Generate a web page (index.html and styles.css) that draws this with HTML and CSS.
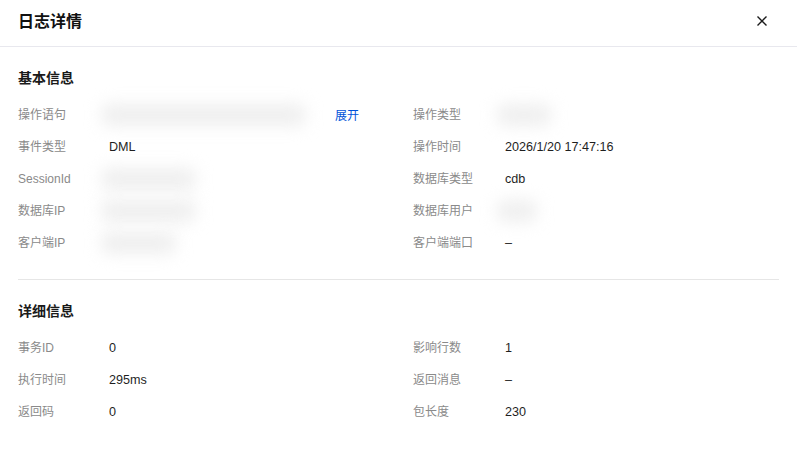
FILE: index.html
```html
<!DOCTYPE html>
<html lang="zh-CN">
<head>
<meta charset="utf-8">
<title>日志详情</title>
<link rel="stylesheet" href="styles.css">
</head>
<body>
<div class="dialog">
  <header class="dlg-head">
    <h1 class="dlg-title">日志详情</h1>
    <button class="dlg-close" aria-label="关闭">
      <svg width="12" height="12" viewBox="0 0 12 12"><path d="M1.5 1.5 L10.5 10.5 M10.5 1.5 L1.5 10.5" stroke="#1a1a1a" stroke-width="1.4" fill="none"/></svg>
    </button>
  </header>
  <main class="dlg-body">
    <section class="sec">
      <h2 class="sec-title">基本信息</h2>
      <div class="grid">
        <div class="item"><span class="lbl">操作语句</span><span class="val"><span class="blur blur-wide"></span><a class="link">展开</a></span></div>
        <div class="item"><span class="lbl">操作类型</span><span class="val"><span class="blur blur-s"></span></span></div>
        <div class="item"><span class="lbl">事件类型</span><span class="val">DML</span></div>
        <div class="item"><span class="lbl">操作时间</span><span class="val">2026/1/20 17:47:16</span></div>
        <div class="item"><span class="lbl">SessionId</span><span class="val"><span class="blur blur-m"></span></span></div>
        <div class="item"><span class="lbl">数据库类型</span><span class="val">cdb</span></div>
        <div class="item"><span class="lbl">数据库IP</span><span class="val"><span class="blur blur-m"></span></span></div>
        <div class="item"><span class="lbl">数据库用户</span><span class="val"><span class="blur blur-xs"></span></span></div>
        <div class="item"><span class="lbl">客户端IP</span><span class="val"><span class="blur blur-ms"></span></span></div>
        <div class="item"><span class="lbl">客户端端口</span><span class="val">–</span></div>
      </div>
    </section>
    <hr class="divider">
    <section class="sec">
      <h2 class="sec-title">详细信息</h2>
      <div class="grid">
        <div class="item"><span class="lbl">事务ID</span><span class="val">0</span></div>
        <div class="item"><span class="lbl">影响行数</span><span class="val">1</span></div>
        <div class="item"><span class="lbl">执行时间</span><span class="val">295ms</span></div>
        <div class="item"><span class="lbl">返回消息</span><span class="val">–</span></div>
        <div class="item"><span class="lbl">返回码</span><span class="val">0</span></div>
        <div class="item"><span class="lbl">包长度</span><span class="val">230</span></div>
      </div>
    </section>
  </main>
  <div class="watermark" aria-hidden="true">
    <span class="wm wm1">693daa43</span><span class="wm wm2">693daa43</span><span class="wm wm3">693daa43</span><span class="wm wm4">693daa43</span>
    <span class="wm wm5">693daa43</span><span class="wm wm6">693daa43</span><span class="wm wm7">693daa43</span><span class="wm wm8">693daa43</span>
    <span class="wm wm9">693daa43</span><span class="wm wm10">693daa43</span><span class="wm wm11">693daa43</span><span class="wm wm12">693daa43</span>
  </div>
</div>
</body>
</html>
```
FILE: styles.css
```css
* { box-sizing: border-box; }
html, body { margin: 0; padding: 0; background: #fff; }
body {
  font-family: "Liberation Sans", Arial, "Noto Sans CJK SC", sans-serif;
  color: #1f1f1f;
  width: 797px;
  height: 450px;
  overflow: hidden;
}
.dialog { position: relative; width: 797px; height: 450px; }
.dlg-head {
  height: 47px;
  border-bottom: 1px solid #e8e8ee;
  display: flex;
  align-items: center;
  justify-content: space-between;
  padding: 0 29px 6px 18px;
}
.dlg-title {
  margin: 0;
  font-size: 16px;
  font-weight: 600;
  color: #111;
  line-height: 24px;
  font-family: "Noto Sans CJK SC", sans-serif;
}
.dlg-close {
  border: 0; background: none; padding: 0; margin: 0;
  width: 12px; height: 12px; display: flex;
  margin-top: 2px;
}
.dlg-body { padding: 19px 18px 0 18px; }
.sec-title {
  margin: 0 0 10px 0;
  font-size: 14px;
  font-weight: 700;
  line-height: 22px;
  color: #1a1a1a;
  font-family: "Noto Sans CJK SC", sans-serif;
}
.grid {
  display: grid;
  grid-template-columns: 395px 1fr;
}
.item {
  display: flex;
  align-items: center;
  height: 32px;
  padding-top: 1px;
  font-size: 12px;
  line-height: 20px;
}
.lbl {
  width: 91px;
  flex: none;
  color: #8a8a8a;
  font-family: "Liberation Sans", "Noto Sans CJK SC", sans-serif;
}
.item:nth-child(2n) .lbl { width: 92px; }
.val {
  display: flex;
  align-items: center;
  color: #1f1f1f;
  position: relative;
  font-size: 12.6px;
}
.link {
  color: #0052d9;
  font-size: 12px;
  margin-left: 29px;
  font-family: "Noto Sans CJK SC", sans-serif;
  cursor: pointer;
}
.blur {
  display: inline-block;
  height: 22px;
  border-radius: 8px;
  background: #efefef;
  filter: blur(8px);
  margin-left: -8px;
}
.blur-wide { width: 205px; }
.blur-s { width: 54px; }
.blur-m { width: 95px; }
.blur-ms { width: 75px; }
.blur-xs { width: 40px; }
.divider {
  border: 0;
  border-top: 1px solid #e6e6e6;
  margin: 21px 0 19px 0;
}
.watermark {
  position: absolute;
  inset: 0;
  pointer-events: none;
  overflow: hidden;
}
.wm {
  position: absolute;
  font-size: 48px;
  font-family: "Liberation Sans", sans-serif;
  color: rgba(0, 0, 0, 0.015);
  letter-spacing: 1px;
  white-space: nowrap;
}
.wm1 { left: -130px; top: 95px; }
.wm2 { left: 433px; top: 95px; }
.wm3 { left: 713px; top: 95px; }
.wm4 { left: 150px; top: 175px; }
.wm5 { left: 433px; top: 175px; }
.wm6 { left: 713px; top: 175px; }
.wm7 { left: -130px; top: 255px; }
.wm8 { left: 150px; top: 255px; }
.wm9 { left: 150px; top: 330px; }
.wm10 { left: 433px; top: 330px; }
.wm11 { left: 713px; top: 330px; }
.wm12 { left: 150px; top: 405px; }
```
